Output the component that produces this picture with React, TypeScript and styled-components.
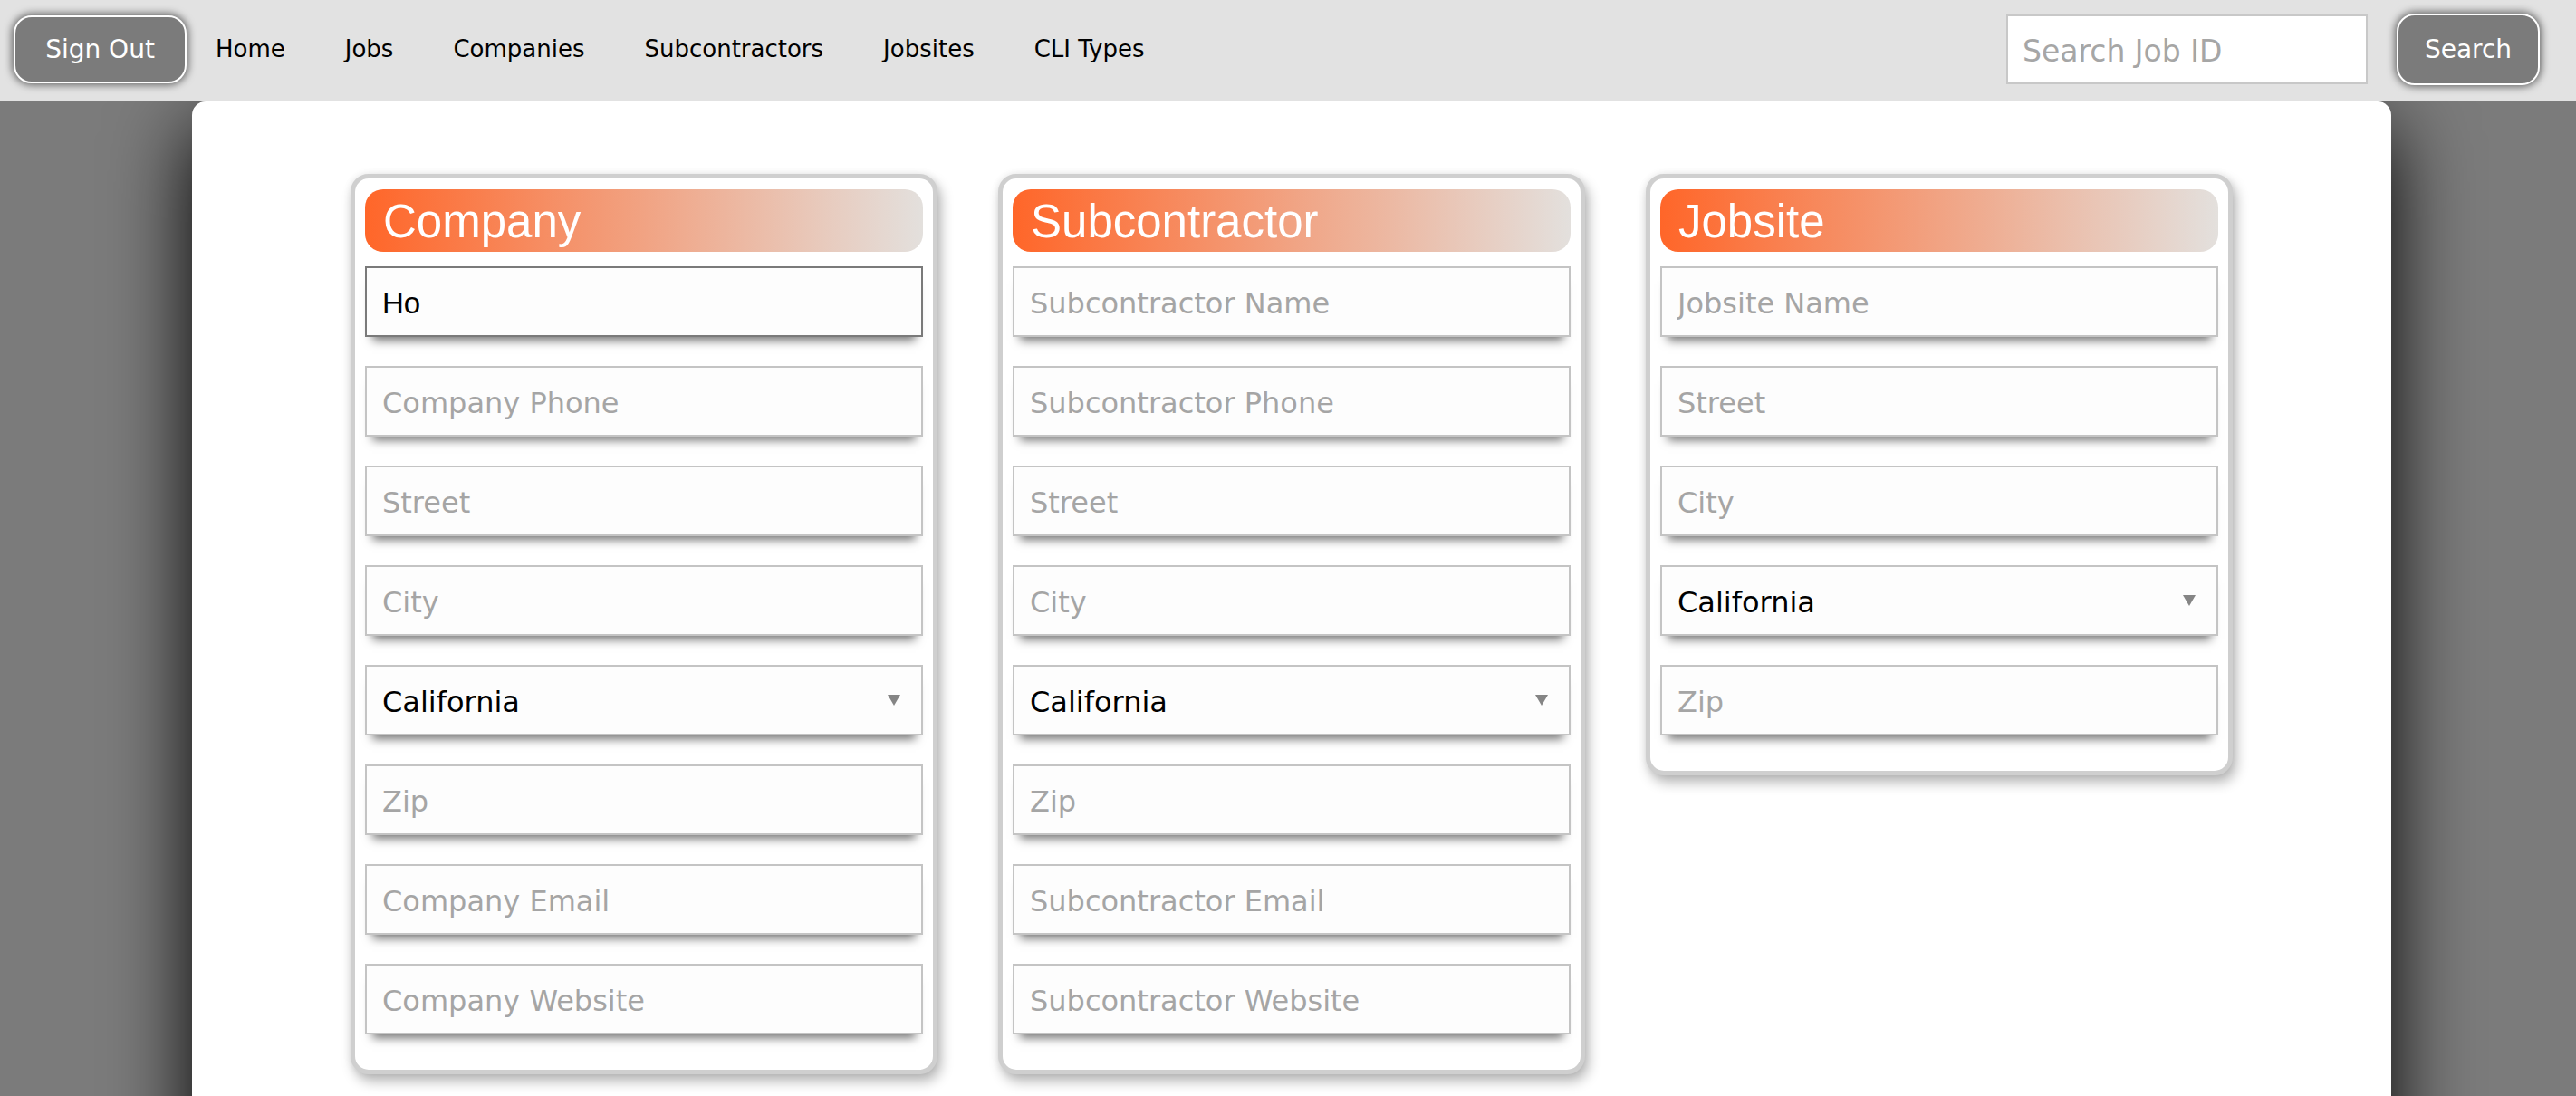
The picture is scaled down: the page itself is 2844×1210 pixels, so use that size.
import React from "react";
import styled, { createGlobalStyle } from "styled-components";

const GlobalStyle = createGlobalStyle`
  html, body {
    margin: 0;
    padding: 0;
    overflow: hidden;
    background: #7b7b7b;
    font-family: "DejaVu Sans", Verdana, sans-serif;
  }
  * {
    box-sizing: border-box;
  }
`;

const NavBar = styled.header`
  position: relative;
  z-index: 2;
  display: flex;
  align-items: center;
  height: 112px;
  padding: 0 40px 3px 15px;
  background: #e2e2e2;
`;

const PillButton = styled.button<{ $w: number; $h: number }>`
  width: ${(p) => p.$w}px;
  height: ${(p) => p.$h}px;
  border: 2px solid #fff;
  border-radius: 20px;
  background: #7b7b7b;
  color: #fff;
  font-family: "DejaVu Sans", Verdana, sans-serif;
  font-size: 28px;
  box-shadow: 0 0 9px 2px rgba(0, 0, 0, 0.55);
  cursor: pointer;
`;

const NavLinks = styled.nav`
  display: flex;
  gap: 66px;
  margin-left: 32px;
  margin-bottom: 2px;
`;

const NavLink = styled.a`
  font-size: 26px;
  color: #000;
  text-decoration: none;
`;

const SearchGroup = styled.div`
  display: flex;
  align-items: center;
  gap: 32px;
  margin-left: auto;
`;

const SearchInput = styled.input`
  width: 399px;
  height: 77px;
  border: 2px solid #c8c8c8;
  background: #fff;
  padding: 3px 16px 0;
  font-family: "DejaVu Sans", Verdana, sans-serif;
  font-size: 33px;
  outline: none;
  &::placeholder {
    color: #a6a6a6;
  }
`;

const Panel = styled.main`
  width: 2428px;
  min-height: 1300px;
  margin-left: 212px;
  background: #fff;
  border-radius: 15px 15px 0 0;
  box-shadow: 0 30px 90px #000;
  padding-top: 80px;
`;

const CardRow = styled.div`
  display: flex;
  justify-content: center;
  align-items: flex-start;
  gap: 67px;
`;

const Card = styled.section`
  width: 648px;
  background: #fff;
  border: 5px solid #cfcfcf;
  border-radius: 20px;
  padding: 12px 11px 7px;
  box-shadow: 4px 8px 14px rgba(0, 0, 0, 0.28), 0 0 8px rgba(0, 0, 0, 0.08);
`;

const CardTitle = styled.h2`
  margin: 0 0 16px;
  height: 69px;
  line-height: 71px;
  padding-left: 20px;
  border-radius: 20px;
  background: linear-gradient(to right, #ff6629, #e3e0dd);
  color: #fff;
  font-family: "Liberation Sans", Arial, sans-serif;
  font-size: 51px;
  font-weight: normal;
`;

const fieldBase = `
  display: block;
  width: 100%;
  height: 78px;
  margin: 0 0 32px;
  padding: 3px 17px 0;
  background: #fdfdfd;
  border: 2px solid #c4c4c4;
  border-radius: 0;
  box-shadow: 0 12px 10px -8px rgba(0, 0, 0, 0.55);
  outline: none;
`;

const Field = styled.input<{ $focused?: boolean }>`
  ${fieldBase}
  border-color: ${(p) => (p.$focused ? "#7a7a7a" : "#c4c4c4")};
  font-family: "Liberation Sans", Arial, sans-serif;
  font-size: 33px;
  color: #000;
  &::placeholder {
    font-family: "DejaVu Sans", Verdana, sans-serif;
    font-size: 32px;
    color: #a5a5a5;
  }
`;

const SelectWrap = styled.div`
  position: relative;
`;

const StateSelect = styled.select`
  ${fieldBase}
  appearance: none;
  -webkit-appearance: none;
  font-family: "DejaVu Sans", Verdana, sans-serif;
  font-size: 32px;
  color: #000;
`;

const Arrow = styled.svg`
  position: absolute;
  right: 24px;
  top: 32px;
  width: 16px;
  height: 14px;
  pointer-events: none;
`;

type FieldDef = { kind: "text"; placeholder: string; value?: string } | { kind: "state" };

const cards: { title: string; fields: FieldDef[] }[] = [
  {
    title: "Company",
    fields: [
      { kind: "text", placeholder: "Company Name", value: "Ho" },
      { kind: "text", placeholder: "Company Phone" },
      { kind: "text", placeholder: "Street" },
      { kind: "text", placeholder: "City" },
      { kind: "state" },
      { kind: "text", placeholder: "Zip" },
      { kind: "text", placeholder: "Company Email" },
      { kind: "text", placeholder: "Company Website" },
    ],
  },
  {
    title: "Subcontractor",
    fields: [
      { kind: "text", placeholder: "Subcontractor Name" },
      { kind: "text", placeholder: "Subcontractor Phone" },
      { kind: "text", placeholder: "Street" },
      { kind: "text", placeholder: "City" },
      { kind: "state" },
      { kind: "text", placeholder: "Zip" },
      { kind: "text", placeholder: "Subcontractor Email" },
      { kind: "text", placeholder: "Subcontractor Website" },
    ],
  },
  {
    title: "Jobsite",
    fields: [
      { kind: "text", placeholder: "Jobsite Name" },
      { kind: "text", placeholder: "Street" },
      { kind: "text", placeholder: "City" },
      { kind: "state" },
      { kind: "text", placeholder: "Zip" },
    ],
  },
];

const links = ["Home", "Jobs", "Companies", "Subcontractors", "Jobsites", "CLI Types"];

const StateField = () => (
  <SelectWrap>
    <StateSelect defaultValue="CA">
      <option value="CA">California</option>
      <option value="NV">Nevada</option>
      <option value="OR">Oregon</option>
    </StateSelect>
    <Arrow viewBox="0 0 16 14">
      <path d="M1 1h14L8 13z" fill="#858585" />
    </Arrow>
  </SelectWrap>
);

const App = () => {
  return (
    <>
      <GlobalStyle />
      <NavBar>
        <PillButton $w={191} $h={75}>Sign Out</PillButton>
        <NavLinks>
          {links.map((l) => (
            <NavLink key={l} href="#">
              {l}
            </NavLink>
          ))}
        </NavLinks>
        <SearchGroup>
          <SearchInput placeholder="Search Job ID" />
          <PillButton $w={158} $h={79}>Search</PillButton>
        </SearchGroup>
      </NavBar>
      <Panel>
        <CardRow>
          {cards.map((c) => (
            <Card key={c.title}>
              <CardTitle>{c.title}</CardTitle>
              {c.fields.map((f, i) =>
                f.kind === "state" ? (
                  <StateField key={i} />
                ) : (
                  <Field
                    key={i}
                    placeholder={f.placeholder}
                    defaultValue={f.value}
                    $focused={!!f.value}
                  />
                )
              )}
            </Card>
          ))}
        </CardRow>
      </Panel>
    </>
  );
};

export default App;
